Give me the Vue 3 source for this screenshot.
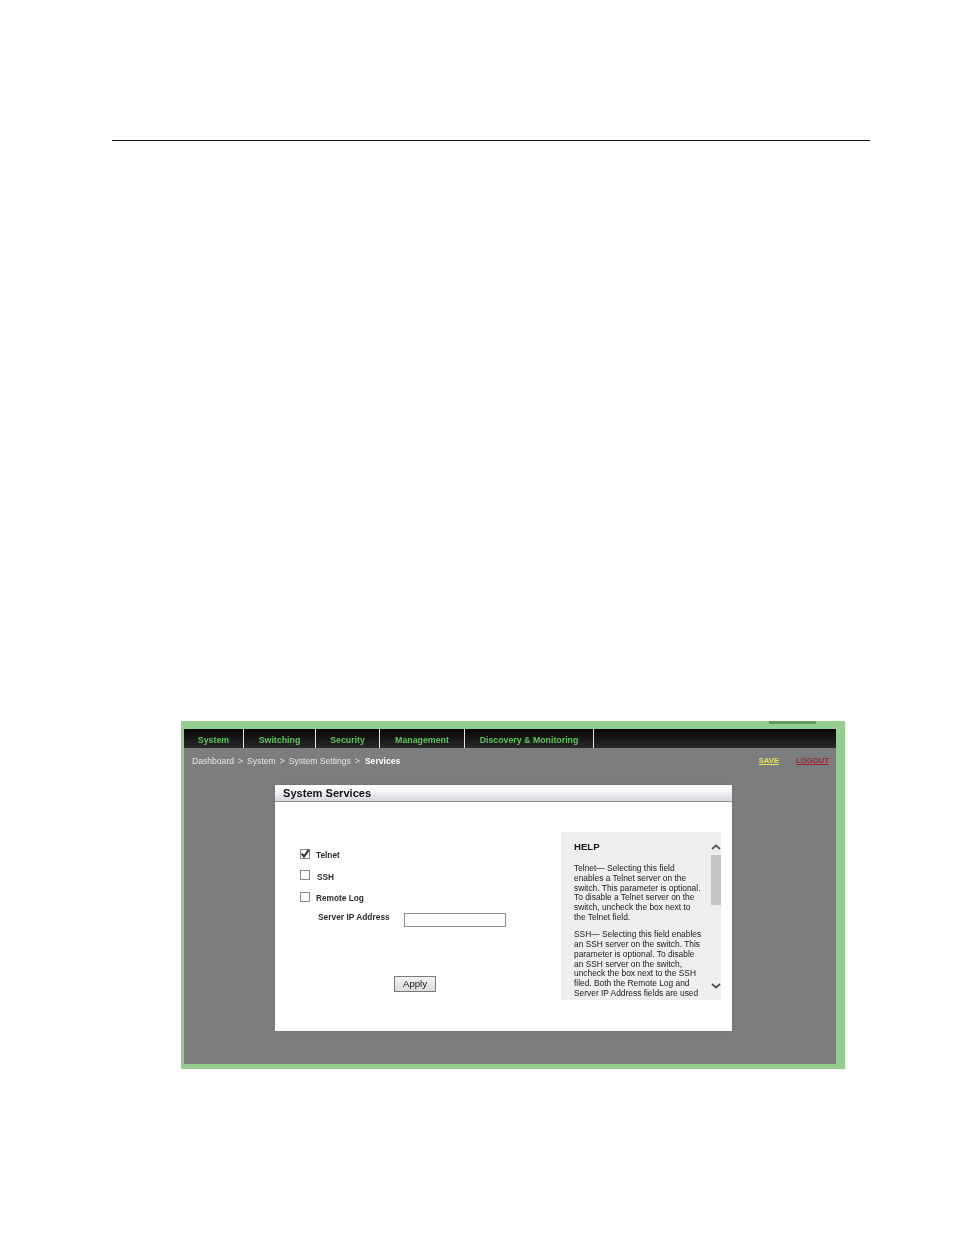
<template>
  <div class="page">
    <hr class="rule" />
    <div class="shot">
      <span class="nub"></span>
      <nav class="tabs">
        <a v-for="tab in tabs" :key="tab.label" class="tab" :style="{ width: tab.width + 'px' }">{{ tab.label }}</a>
      </nav>
      <div class="main">
        <div class="crumbs">
          <div class="trail">
            <template v-for="c in crumbs" :key="c">
              <span>{{ c }}</span>
              <span class="sep">&gt;</span>
            </template>
            <b>Services</b>
          </div>
          <a class="save">SAVE</a>
          <a class="logout">LOGOUT</a>
        </div>
        <section class="panel">
          <h2 class="panel-head">System Services</h2>
          <div class="panel-body">
            <form class="form" @submit.prevent>
              <label class="row">
                <span class="box">
                  <svg class="tick" viewBox="0 0 10 10" width="10" height="10">
                    <path d="M1.8 4.6 L4 7.6 L8.8 0.8" fill="none" stroke="#333" stroke-width="2" />
                  </svg>
                </span>
                Telnet
              </label>
              <label class="row"><span class="box"></span><span class="ssh">SSH</span></label>
              <label class="row"><span class="box"></span>Remote Log</label>
              <div class="ip-row">
                <span class="ip-label">Server IP Address</span>
                <span class="ip-input"></span>
              </div>
              <button class="apply">Apply</button>
            </form>
            <aside class="help">
              <div class="help-text">
                <h3>HELP</h3>
                <p>Telnet— Selecting this field<br />enables a Telnet server on the<br />switch. This parameter is optional.<br />To disable a Telnet server on the<br />switch, uncheck the box next to<br />the Telnet field.</p>
                <p>SSH— Selecting this field enables<br />an SSH server on the switch. This<br />parameter is optional. To disable<br />an SSH server on the switch,<br />uncheck the box next to the SSH<br />filed. Both the Remote Log and<br />Server IP Address fields are used</p>
              </div>
              <div class="scroll">
                <svg viewBox="0 0 10 8" width="10" height="8"><path d="M1 6 L5 2.5 L9 6" fill="none" stroke="#555" stroke-width="1.8" /></svg>
                <div class="track"><div class="thumb"></div></div>
                <svg viewBox="0 0 10 8" width="10" height="8"><path d="M1 2 L5 5.5 L9 2" fill="none" stroke="#555" stroke-width="1.8" /></svg>
              </div>
            </aside>
          </div>
        </section>
      </div>
    </div>
  </div>
</template>

<script setup>
const tabs = [
  { label: 'System', width: 60 },
  { label: 'Switching', width: 72 },
  { label: 'Security', width: 64 },
  { label: 'Management', width: 85 },
  { label: 'Discovery & Monitoring', width: 129 }
]
const crumbs = ['Dashboard', 'System', 'System Settings']
</script>

<style>
html, body {
  margin: 0;
  background: #fff;
}
</style>

<style scoped>
.page {
  height: 1235px;
  padding-top: 140px;
  box-sizing: border-box;
  overflow: hidden;
  font-family: "Liberation Sans", Arial, sans-serif;
}
.rule {
  width: 758px;
  height: 1px;
  margin: 0 0 0 112px;
  border: 0;
  background: #111;
}
.shot {
  position: relative;
  display: flex;
  flex-direction: column;
  width: 664px;
  height: 348px;
  box-sizing: border-box;
  margin: 580px 0 0 181px;
  padding: 8px 9px 5px 3px;
  background: #93cd90;
  filter: blur(0.3px);
}
.nub {
  position: absolute;
  left: 588px;
  top: 0;
  width: 47px;
  height: 3px;
  background: #5f9a5c;
}
.tabs {
  display: flex;
  height: 19px;
  background: linear-gradient(#050505, #2a2a2c);
}
.tab {
  box-sizing: border-box;
  border-right: 1px solid #e4e4e4;
  color: #5ec45a;
  font-size: 8.8px;
  font-weight: bold;
  line-height: 23px;
  text-align: center;
}
.main {
  flex: 1;
  background: #7c7d7f;
}
.crumbs {
  display: flex;
  align-items: center;
  height: 27px;
  padding: 0 7px 0 8px;
  color: #e6e6e6;
  font-size: 8.6px;
}
.trail {
  flex: 1;
  display: flex;
  gap: 4px;
  margin-top: -2px;
}
.trail b {
  margin-left: 1px;
  color: #fff;
}
.save {
  margin: -2px 17px 0 0;
  color: #e5e35a;
  font-size: 7.7px;
  font-weight: bold;
  text-decoration: underline;
}
.logout {
  margin-top: -2px;
  color: #a81f2c;
  font-size: 7.7px;
  font-weight: bold;
  text-decoration: underline;
}
.panel {
  width: 457px;
  height: 246px;
  margin: 10px 0 0 91px;
  background: #fff;
  box-shadow: 0 0 3px #6d6e70;
}
.panel-head {
  height: 17px;
  margin: 0;
  padding-left: 8px;
  border-bottom: 1px solid #8d8f93;
  box-sizing: border-box;
  background: linear-gradient(#fff, #f6f6f8 40%, #d6d7dc);
  color: #111;
  font-size: 11.1px;
  font-weight: bold;
  line-height: 17px;
}
.panel-body {
  display: flex;
}
.form {
  width: 286px;
  padding: 46px 0 0 25px;
  box-sizing: border-box;
  color: #2c2c2c;
  font-size: 8.3px;
}
.row {
  display: flex;
  align-items: center;
  gap: 6px;
  height: 14px;
  margin-bottom: 7.5px;
  font-weight: bold;
}
.box {
  display: flex;
  width: 10px;
  height: 10px;
  box-sizing: border-box;
  margin-top: -3px;
  border: 1px solid #8a8a8a;
  background: #fdfdfd;
}
.tick {
  flex: none;
  margin: -1px;
}
.ssh {
  margin-left: 1px;
}
.ip-row {
  display: flex;
  align-items: center;
  margin-left: 18px;
  font-size: 8.4px;
  font-weight: bold;
}
.ip-label {
  width: 86px;
  margin-top: -6px;
}
.ip-input {
  width: 100px;
  height: 12px;
  border: 1px solid #8f8f8f;
  background: #fff;
}
.apply {
  display: block;
  width: 42px;
  height: 16px;
  margin: 49px 0 0 94px;
  padding: 0;
  border: 1px solid #7a7a7a;
  background: linear-gradient(#f2f2f2, #dcdcdc);
  color: #111;
  font-family: inherit;
  font-size: 9.6px;
}
.help {
  display: flex;
  width: 160px;
  height: 168px;
  margin-top: 30px;
  background: #eeeeee;
  overflow: hidden;
}
.help-text {
  flex: 1;
  padding: 10px 0 0 13px;
  color: #1a1a1a;
  font-size: 8.4px;
  line-height: 9.8px;
  white-space: nowrap;
}
.help-text h3 {
  margin: 0 0 12px;
  font-size: 9.6px;
  line-height: 10px;
}
.help-text p {
  margin: 0 0 7.5px;
}
.scroll {
  display: flex;
  flex-direction: column;
  width: 10px;
  padding-top: 11px;
}
.track {
  height: 123px;
  margin: 4px 0;
}
.thumb {
  height: 50px;
  background: #c6c6c6;
}
</style>
